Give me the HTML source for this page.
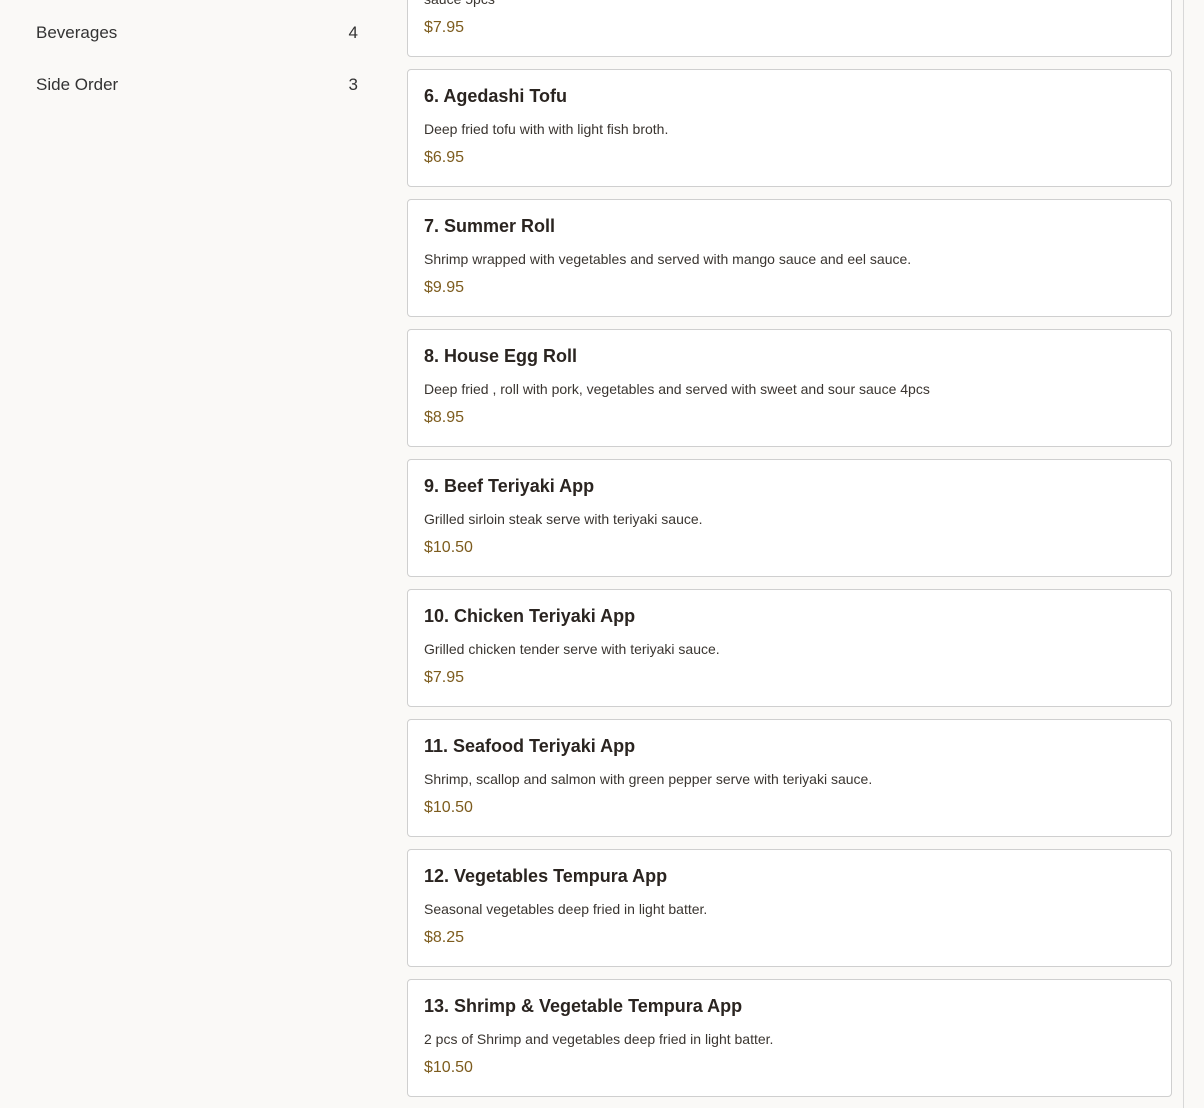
<!DOCTYPE html>
<html><head><meta charset="utf-8"><style>
*{margin:0;padding:0;box-sizing:border-box}
body{width:1204px;height:1108px;background:#faf9f7;font-family:"Liberation Sans",sans-serif;position:relative;overflow:hidden;color:#2a2520}
.side{position:absolute;left:36px;width:322px;font-size:17px;color:#333;display:flex;justify-content:space-between;line-height:20px}
.card{position:absolute;left:407px;width:765px;height:118px;background:#fff;border:1px solid #cfcfcf;border-radius:4px}
.t{position:absolute;left:16px;top:16px;font-size:18px;font-weight:bold;line-height:20px;color:#2a2420}
.d{position:absolute;left:16px;top:50px;font-size:14px;line-height:18px;color:#3a3530}
.p{position:absolute;left:16px;top:78px;font-size:16px;line-height:20px;color:#7d5c1e}
.vl{position:absolute;left:1183px;top:0;width:1px;height:1108px;background:#d8d8d8}
</style></head><body>
<div class="side" style="top:23px"><span>Beverages</span><span>4</span></div>
<div class="side" style="top:75px"><span>Side Order</span><span>3</span></div>
<div class="vl"></div>
<div class="card" style="top:-61px"><div class="d">sauce 5pcs</div><div class="p">$7.95</div></div>
<div class="card" style="top:69px"><div class="t">6. Agedashi Tofu</div><div class="d">Deep fried tofu with with light fish broth.</div><div class="p">$6.95</div></div>
<div class="card" style="top:199px"><div class="t">7. Summer Roll</div><div class="d">Shrimp wrapped with vegetables and served with mango sauce and eel sauce.</div><div class="p">$9.95</div></div>
<div class="card" style="top:329px"><div class="t">8. House Egg Roll</div><div class="d">Deep fried , roll with pork, vegetables and served with sweet and sour sauce 4pcs</div><div class="p">$8.95</div></div>
<div class="card" style="top:459px"><div class="t">9. Beef Teriyaki App</div><div class="d">Grilled sirloin steak serve with teriyaki sauce.</div><div class="p">$10.50</div></div>
<div class="card" style="top:589px"><div class="t">10. Chicken Teriyaki App</div><div class="d">Grilled chicken tender serve with teriyaki sauce.</div><div class="p">$7.95</div></div>
<div class="card" style="top:719px"><div class="t">11. Seafood Teriyaki App</div><div class="d">Shrimp, scallop and salmon with green pepper serve with teriyaki sauce.</div><div class="p">$10.50</div></div>
<div class="card" style="top:849px"><div class="t">12. Vegetables Tempura App</div><div class="d">Seasonal vegetables deep fried in light batter.</div><div class="p">$8.25</div></div>
<div class="card" style="top:979px"><div class="t">13. Shrimp &amp; Vegetable Tempura App</div><div class="d">2 pcs of Shrimp and vegetables deep fried in light batter.</div><div class="p">$10.50</div></div>
</body></html>
